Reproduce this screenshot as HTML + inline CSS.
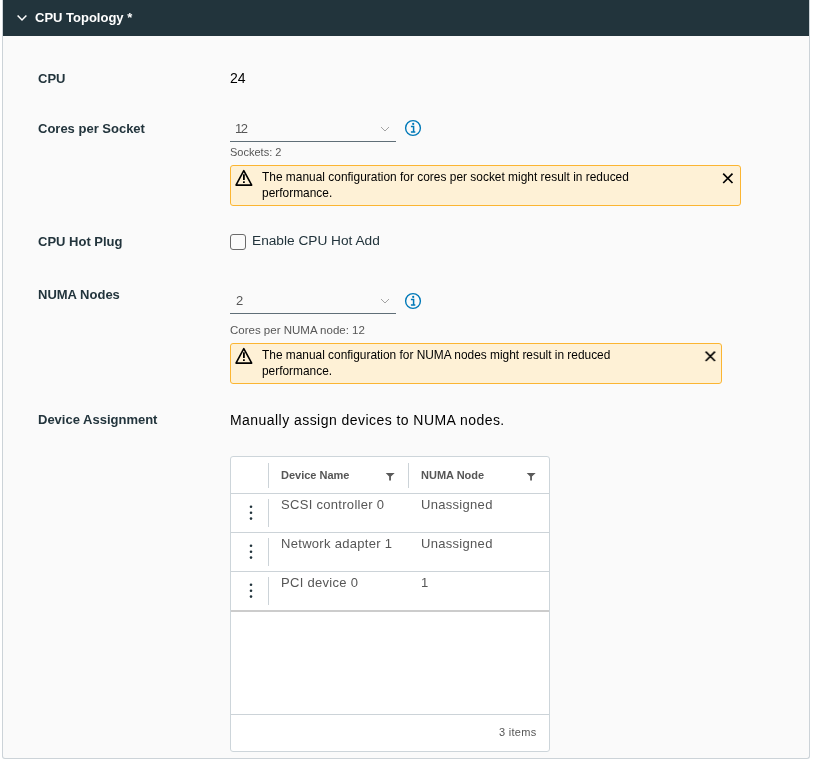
<!DOCTYPE html>
<html><head><meta charset="utf-8">
<style>
*{box-sizing:border-box;margin:0;padding:0}
body *{will-change:transform}
html,body{width:819px;height:771px;background:#fff;overflow:hidden;font-family:"Liberation Sans",sans-serif}
.a{position:absolute;white-space:nowrap}
#panel{position:absolute;left:2px;top:0;width:808px;height:759px;background:#fafafa;border:1px solid #ccd3d8;border-top:none;border-radius:0 0 3px 3px}
#hdr{position:absolute;left:3px;top:0;width:806px;height:36px;background:#22343c}
.lbl{position:absolute;left:38px;font-size:13px;font-weight:bold;color:#22343c;white-space:nowrap;line-height:16px}
.sel{position:absolute;left:230px;width:166px;height:1px;background:#5f6e77}
.hint{position:absolute;left:230px;font-size:11px;color:#565656;white-space:nowrap;line-height:14px}
.alert{position:absolute;left:230px;background:#fef1d6;border:1px solid #fbb532;border-radius:3px}
.at{position:absolute;left:262px;font-size:11.9px;line-height:16px;color:#000;white-space:nowrap}
.gh{font-size:11px;font-weight:bold;color:#565656;line-height:14px}
.gc{font-size:13px;color:#565656;line-height:16px;letter-spacing:0.3px}
.hl{position:absolute;background:#ccd3d8}
</style></head><body>
<div id="panel"></div>
<div id="hdr"></div>
<svg class="a" style="left:16px;top:14px" width="12" height="8" viewBox="0 0 12 8"><path d="M1.6 1.4 L6 5.9 L10.4 1.4" fill="none" stroke="#fff" stroke-width="1.5"/></svg>
<div class="a" style="left:35px;top:10px;font-size:13px;font-weight:bold;color:#fff;line-height:16px">CPU Topology *</div>

<div class="lbl" style="top:71px">CPU</div>
<div class="a" style="left:230px;top:70px;font-size:14px;color:#000;line-height:16px">24</div>

<div class="lbl" style="top:121px">Cores per Socket</div>
<div class="a" style="left:235px;top:121px;font-size:13px;color:#565656;line-height:16px;letter-spacing:-1.5px">12</div>
<svg class="a" style="left:380px;top:126px" width="10" height="7" viewBox="0 0 10 7"><path d="M1 1 L5 5 L9 1" fill="none" stroke="#a3a3a3" stroke-width="1"/></svg>
<div class="sel" style="top:141px"></div>
<svg class="a" style="left:404px;top:119px" width="18" height="18" viewBox="0 0 18 18"><circle cx="9" cy="9" r="7.4" fill="none" stroke="#0079b8" stroke-width="1.4"/><circle cx="9.2" cy="4.9" r="1.1" fill="#0079b8"/><path d="M6.9 7.6 H9.6 V12.8 M6.9 12.9 H11.3" fill="none" stroke="#0079b8" stroke-width="1.5"/></svg>
<div class="hint" style="top:145px">Sockets: 2</div>
<div class="alert" style="top:165px;width:511px;height:41px"></div>
<svg class="a" style="left:230px;top:165px" width="30" height="25" viewBox="230 165 30 25"><path d="M243.8 170.7 L251.7 185.1 H236 Z" fill="none" stroke="#000" stroke-width="1.6" stroke-linejoin="round"/><rect x="243" y="174.3" width="1.8" height="5.7" fill="#000"/><rect x="243" y="181.3" width="1.8" height="1.7" fill="#000"/></svg>
<div class="at" style="top:169px;letter-spacing:0.02px">The manual configuration for cores per socket might result in reduced<br>performance.</div>
<svg class="a" style="left:720px;top:170px" width="16" height="16" viewBox="720 170 16 16"><path d="M723.2 173.7 L732.5 183 M732.5 173.7 L723.2 183" stroke="#000" stroke-width="1.7"/></svg>

<div class="lbl" style="top:234px">CPU Hot Plug</div>
<div class="a" style="left:230px;top:234px;width:16px;height:16px;border:1.3px solid #6a6a6a;border-radius:3px;background:transparent"></div>
<div class="a" style="left:252px;top:233px;font-size:13.7px;color:#22343c;line-height:16px">Enable CPU Hot Add</div>

<div class="lbl" style="top:287px">NUMA Nodes</div>
<div class="a" style="left:236px;top:293px;font-size:13px;color:#565656;line-height:16px">2</div>
<svg class="a" style="left:380px;top:298px" width="10" height="7" viewBox="0 0 10 7"><path d="M1 1 L5 5 L9 1" fill="none" stroke="#a3a3a3" stroke-width="1"/></svg>
<div class="sel" style="top:313px"></div>
<svg class="a" style="left:404px;top:292px" width="18" height="18" viewBox="0 0 18 18"><circle cx="9" cy="9" r="7.4" fill="none" stroke="#0079b8" stroke-width="1.4"/><circle cx="9.2" cy="4.9" r="1.1" fill="#0079b8"/><path d="M6.9 7.6 H9.6 V12.8 M6.9 12.9 H11.3" fill="none" stroke="#0079b8" stroke-width="1.5"/></svg>
<div class="hint" style="top:323px;font-size:11.5px">Cores per NUMA node: 12</div>
<div class="alert" style="top:343px;width:492px;height:41px"></div>
<svg class="a" style="left:230px;top:343px" width="30" height="25" viewBox="230 165 30 25"><path d="M243.8 170.7 L251.7 185.1 H236 Z" fill="none" stroke="#000" stroke-width="1.6" stroke-linejoin="round"/><rect x="243" y="174.3" width="1.8" height="5.7" fill="#000"/><rect x="243" y="181.3" width="1.8" height="1.7" fill="#000"/></svg>
<div class="at" style="top:347px">The manual configuration for NUMA nodes might result in reduced<br>performance.</div>
<svg class="a" style="left:702px;top:348px" width="16" height="16" viewBox="719.5 170 16 16"><path d="M723.2 173.7 L732.5 183 M732.5 173.7 L723.2 183" stroke="#000" stroke-width="1.7"/></svg>

<div class="lbl" style="top:412px">Device Assignment</div>
<div class="a" style="left:230px;top:412px;font-size:14px;color:#000;line-height:16px;letter-spacing:0.45px">Manually assign devices to NUMA nodes.</div>

<div class="a" style="left:230px;top:456px;width:320px;height:296px;background:#fff;border:1px solid #cdd5da;border-radius:3px"></div>
<div class="hl" style="left:268px;top:463px;width:1px;height:25px"></div>
<div class="hl" style="left:408px;top:463px;width:1px;height:25px"></div>
<div class="a gh" style="left:281px;top:468px">Device Name</div>
<div class="a gh" style="left:421px;top:468px">NUMA Node</div>
<svg class="a" style="left:385px;top:473px" width="10" height="9" viewBox="0 0 10 9"><path d="M0.7 0 H9.7 L5.95 3.6 V7.6 H4.15 V3.6 Z" fill="#5a5a5a"/></svg>
<svg class="a" style="left:526px;top:473px" width="10" height="9" viewBox="0 0 10 9"><path d="M0.7 0 H9.7 L5.95 3.6 V7.6 H4.15 V3.6 Z" fill="#5a5a5a"/></svg>
<div class="hl" style="left:231px;top:493px;width:318px;height:1px"></div>

<div class="hl" style="left:268px;top:499px;width:1px;height:28px"></div>
<svg class="a" style="left:248px;top:504px" width="6" height="18" viewBox="0 0 6 18"><circle cx="3" cy="2.8" r="1.3" fill="#22343c"/><circle cx="3" cy="8.7" r="1.3" fill="#22343c"/><circle cx="3" cy="14.6" r="1.3" fill="#22343c"/></svg>
<div class="a gc" style="left:281px;top:497px">SCSI controller 0</div>
<div class="a gc" style="left:421px;top:497px">Unassigned</div>
<div class="hl" style="left:231px;top:532px;width:318px;height:1px"></div>

<div class="hl" style="left:268px;top:538px;width:1px;height:28px"></div>
<svg class="a" style="left:248px;top:543px" width="6" height="18" viewBox="0 0 6 18"><circle cx="3" cy="2.8" r="1.3" fill="#22343c"/><circle cx="3" cy="8.7" r="1.3" fill="#22343c"/><circle cx="3" cy="14.6" r="1.3" fill="#22343c"/></svg>
<div class="a gc" style="left:281px;top:536px">Network adapter 1</div>
<div class="a gc" style="left:421px;top:536px">Unassigned</div>
<div class="hl" style="left:231px;top:571px;width:318px;height:1px"></div>

<div class="hl" style="left:268px;top:577px;width:1px;height:28px"></div>
<svg class="a" style="left:248px;top:582px" width="6" height="18" viewBox="0 0 6 18"><circle cx="3" cy="2.8" r="1.3" fill="#22343c"/><circle cx="3" cy="8.7" r="1.3" fill="#22343c"/><circle cx="3" cy="14.6" r="1.3" fill="#22343c"/></svg>
<div class="a gc" style="left:281px;top:575px">PCI device 0</div>
<div class="a gc" style="left:421px;top:575px">1</div>
<div class="a" style="left:231px;top:610px;width:318px;height:2px;background:#cccccc"></div>

<div class="hl" style="left:231px;top:714px;width:318px;height:1px"></div>
<div class="a" style="left:499px;top:725px;font-size:11px;color:#565656;line-height:14px;letter-spacing:0.3px">3 items</div>

</body></html>
